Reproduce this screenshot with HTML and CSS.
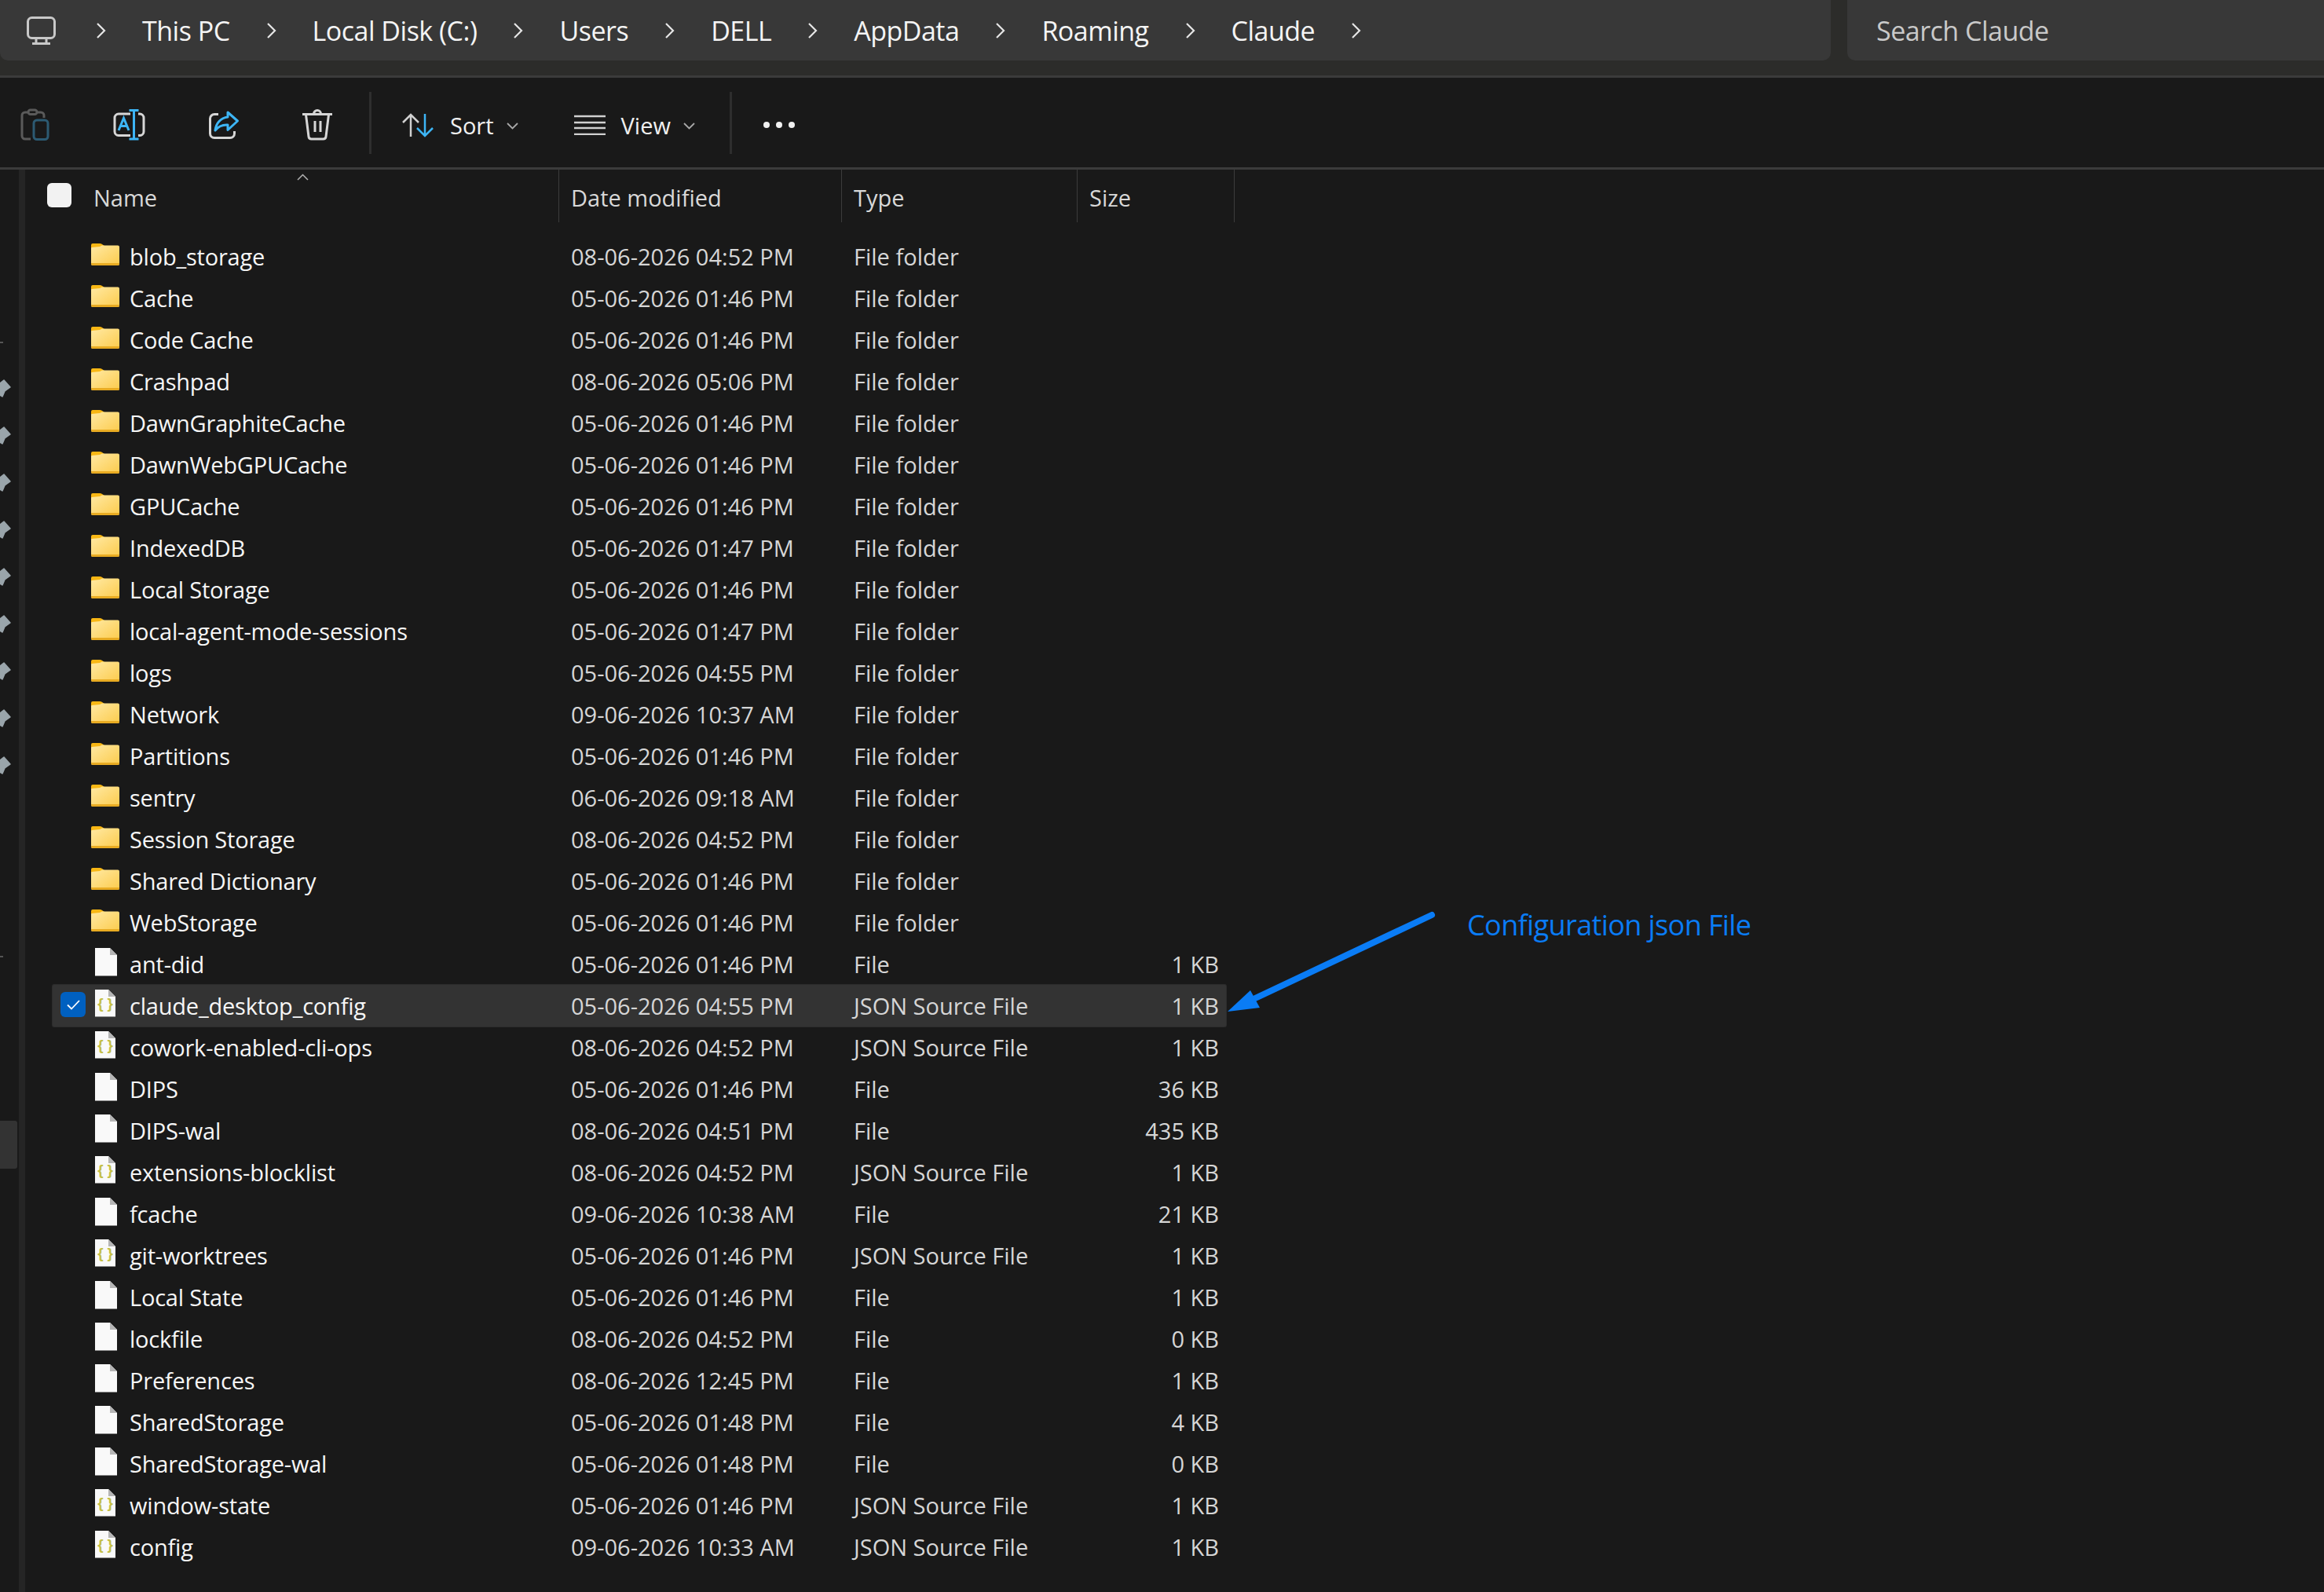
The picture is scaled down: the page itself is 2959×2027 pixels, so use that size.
FILE: index.html
```html
<!DOCTYPE html>
<html lang="en">
<head>
    <meta charset="UTF-8">
    <title>Claude - File Explorer</title>
    <link rel="stylesheet" href="styles.css">
</head>
<body>
    <!-- Shared icons -->
    <svg class="defs" width="0" height="0">
        <defs>
            <linearGradient id="folderFill" x1="0" y1="0" x2="1" y2="1">
                <stop offset="0" stop-color="#ffe9a3"/>
                <stop offset="1" stop-color="#fccb4c"/>
            </linearGradient>
            <symbol id="folder" viewBox="0 0 36 36">
                <path d="M0 6a2 2 0 0 1 2-2h9a5 5 0 0 1 3 1l3 2v4H0z" fill="#f8b714"/>
                <path d="M0 10a1 1 0 0 1 1-1l10-1 3-1.500h20a2 2 0 0 1 2 2V30a2 2 0 0 1-2 2H2a2 2 0 0 1-2-2z" fill="url(#folderFill)"/>
                <path d="M0 30a2 2 0 0 0 2 2h32a2 2 0 0 0 2-2v-1H0z" fill="#e8ab22"/>
            </symbol>
            <symbol id="file" viewBox="0 0 36 36">
                <path d="M5 0h19l9 9v27H5z" fill="#f9f9f9"/>
                <path d="M24 0l9 9h-9z" fill="#b5b5b5"/>
                <path d="M5 35h28v1H5z" fill="#8a8a8a"/>
            </symbol>
            <symbol id="json" viewBox="0 0 36 36">
                <path d="M5 0h17l9 9v26H5z" fill="#f9f9f9"/>
                <path d="M22 0l9 9h-9z" fill="#b5b5b5"/>
                <path d="M5 34h26v1H5z" fill="#8a8a8a"/>
                <text x="18" y="24" text-anchor="middle" class="brace">{ }</text>
            </symbol>
            <symbol id="pin" viewBox="0 0 14 24">
                <path d="M0 5L5 1l8 9-7 5-3 7-3-2z" fill="#9aa5ab" stroke="#9aa5ab" stroke-width="1.500" stroke-linejoin="round"/>
            </symbol>
            <symbol id="chev" viewBox="0 0 13 20">
                <path d="M2 1l9 9-9 9" fill="none" stroke="#e6e6e6" stroke-width="2.200"/>
            </symbol>
            <symbol id="caret" viewBox="0 0 15 9">
                <path d="M1 1l6.500 6.500L14 1" fill="none" stroke="#a8a8a8" stroke-width="1.800"/>
            </symbol>
        </defs>
    </svg>

    <div class="topbar">
        <div class="crumbs">
            <svg class="pc-icon" viewBox="0 0 37 36" fill="none" stroke="#c8c8c8" stroke-width="3">
                <rect x="1.500" y="1.500" width="34" height="26" rx="5"/>
                <path d="M12 27v7M25 27v7M7 34.500h23"/>
            </svg>
            <svg class="chev"><use href="#chev"/></svg>
            <span>This PC</span>
            <svg class="chev"><use href="#chev"/></svg>
            <span>Local Disk (C:)</span>
            <svg class="chev"><use href="#chev"/></svg>
            <span>Users</span>
            <svg class="chev"><use href="#chev"/></svg>
            <span>DELL</span>
            <svg class="chev"><use href="#chev"/></svg>
            <span>AppData</span>
            <svg class="chev"><use href="#chev"/></svg>
            <span>Roaming</span>
            <svg class="chev"><use href="#chev"/></svg>
            <span>Claude</span>
            <svg class="chev"><use href="#chev"/></svg>
        </div>
        <div class="search">Search Claude</div>
    </div>

    <div class="toolbar">
        <div class="tool-group">
            <svg class="tool-icon" viewBox="0 0 42 40" fill="none" stroke-width="3">
                <path d="M8 4H5a4 4 0 0 0-4 4v26a4 4 0 0 0 4 4h7M21 4h4a4 4 0 0 1 4 4v3" stroke="#5a5a5a"/>
                <rect x="9" y="1" width="11" height="5.500" rx="2.700" stroke="#5a5a5a"/>
                <rect x="16" y="14" width="18" height="24.500" rx="4" stroke="#2c5a72"/>
            </svg>
            <svg class="tool-icon" viewBox="0 0 42 40" fill="none" stroke-width="3">
                <path d="M20 33.500H5a5 5 0 0 1-5-5V11a5 5 0 0 1 5-5h15M30 6h2a5 5 0 0 1 5 5v17.500a5 5 0 0 1-5 5h-2" stroke="#d6d6d6"/>
                <path d="M24.500 1v37M18.500 1.500h12M18.500 38h12M5 27l6.500-15.500L18 27M7.500 21.500h8" stroke="#3db5f5"/>
            </svg>
            <svg class="tool-icon" viewBox="0 0 42 40" fill="none" stroke-width="3">
                <path d="M13 6.500H8a5.500 5.500 0 0 0-5.500 5.500v19A5.500 5.500 0 0 0 8 36.500h20a5.500 5.500 0 0 0 5.500-5.500v-3" stroke="#d6d6d6"/>
                <path d="M25 4l12.500 11L25 26.500V20c-7-.5-12 2-16 7 1-9 7-16 16-17z" stroke="#3db5f5" stroke-linejoin="round"/>
            </svg>
            <svg class="tool-icon" viewBox="0 0 42 40" fill="none" stroke="#d6d6d6" stroke-width="3">
                <path d="M1 6.500h38M15.500 6a4.500 4.500 0 0 1 9 0M5.500 7l3.500 28a3.500 3.500 0 0 0 3.500 3h15a3.500 3.500 0 0 0 3.500-3l3.500-28M17 15v14M24 15v14"/>
            </svg>
        </div>
        <div class="tool-sep"></div>
        <div class="tool-btn sort-btn">
            <svg class="sort-icon" viewBox="0 0 40 31" fill="none" stroke-width="2.500">
                <path d="M11 30V2M1 12L11 2l10 10" stroke="#d0d0d0"/>
                <path d="M29 1v28M19 19l10 10 10-10" stroke="#3db5f5"/>
            </svg>
            <span>Sort</span>
            <svg class="caret"><use href="#caret"/></svg>
        </div>
        <div class="tool-btn view-btn">
            <svg class="view-icon" viewBox="0 0 40 26" fill="none" stroke="#d0d0d0" stroke-width="2.500">
                <path d="M0 2h40M0 10h40M0 17h40M0 25h40"/>
            </svg>
            <span>View</span>
            <svg class="caret"><use href="#caret"/></svg>
        </div>
        <div class="tool-sep sep-last"></div>
        <div class="dots"><i></i><i></i><i></i></div>
    </div>

    <div class="main">
        <div class="sidebar">
            <div class="side-mark"></div>
            <div class="pins">
                <svg class="pin"><use href="#pin"/></svg>
                <svg class="pin"><use href="#pin"/></svg>
                <svg class="pin"><use href="#pin"/></svg>
                <svg class="pin"><use href="#pin"/></svg>
                <svg class="pin"><use href="#pin"/></svg>
                <svg class="pin"><use href="#pin"/></svg>
                <svg class="pin"><use href="#pin"/></svg>
                <svg class="pin"><use href="#pin"/></svg>
                <svg class="pin"><use href="#pin"/></svg>
            </div>
            <div class="side-mark mark-low"></div>
            <div class="side-active"></div>
        </div>

        <div class="content">
            <div class="list-head">
                <div class="head-cell head-name"><span class="head-check"></span>Name</div>
                <div class="head-cell">Date modified</div>
                <div class="head-cell">Type</div>
                <div class="head-cell">Size</div>
                <svg class="sort-caret" viewBox="0 0 15 9"><path d="M1 8l6.500-6.500L14 8" fill="none" stroke="#b0b0b0" stroke-width="1.500"/></svg>
            </div>

            <div class="rows">
                <div class="row"><div class="name"><span class="check"></span><svg class="icon"><use href="#folder"/></svg>blob_storage</div><div>08-06-2026 04:52 PM</div><div>File folder</div><div class="size"></div></div>
                <div class="row"><div class="name"><span class="check"></span><svg class="icon"><use href="#folder"/></svg>Cache</div><div>05-06-2026 01:46 PM</div><div>File folder</div><div class="size"></div></div>
                <div class="row"><div class="name"><span class="check"></span><svg class="icon"><use href="#folder"/></svg>Code Cache</div><div>05-06-2026 01:46 PM</div><div>File folder</div><div class="size"></div></div>
                <div class="row"><div class="name"><span class="check"></span><svg class="icon"><use href="#folder"/></svg>Crashpad</div><div>08-06-2026 05:06 PM</div><div>File folder</div><div class="size"></div></div>
                <div class="row"><div class="name"><span class="check"></span><svg class="icon"><use href="#folder"/></svg>DawnGraphiteCache</div><div>05-06-2026 01:46 PM</div><div>File folder</div><div class="size"></div></div>
                <div class="row"><div class="name"><span class="check"></span><svg class="icon"><use href="#folder"/></svg>DawnWebGPUCache</div><div>05-06-2026 01:46 PM</div><div>File folder</div><div class="size"></div></div>
                <div class="row"><div class="name"><span class="check"></span><svg class="icon"><use href="#folder"/></svg>GPUCache</div><div>05-06-2026 01:46 PM</div><div>File folder</div><div class="size"></div></div>
                <div class="row"><div class="name"><span class="check"></span><svg class="icon"><use href="#folder"/></svg>IndexedDB</div><div>05-06-2026 01:47 PM</div><div>File folder</div><div class="size"></div></div>
                <div class="row"><div class="name"><span class="check"></span><svg class="icon"><use href="#folder"/></svg>Local Storage</div><div>05-06-2026 01:46 PM</div><div>File folder</div><div class="size"></div></div>
                <div class="row"><div class="name"><span class="check"></span><svg class="icon"><use href="#folder"/></svg>local-agent-mode-sessions</div><div>05-06-2026 01:47 PM</div><div>File folder</div><div class="size"></div></div>
                <div class="row"><div class="name"><span class="check"></span><svg class="icon"><use href="#folder"/></svg>logs</div><div>05-06-2026 04:55 PM</div><div>File folder</div><div class="size"></div></div>
                <div class="row"><div class="name"><span class="check"></span><svg class="icon"><use href="#folder"/></svg>Network</div><div>09-06-2026 10:37 AM</div><div>File folder</div><div class="size"></div></div>
                <div class="row"><div class="name"><span class="check"></span><svg class="icon"><use href="#folder"/></svg>Partitions</div><div>05-06-2026 01:46 PM</div><div>File folder</div><div class="size"></div></div>
                <div class="row"><div class="name"><span class="check"></span><svg class="icon"><use href="#folder"/></svg>sentry</div><div>06-06-2026 09:18 AM</div><div>File folder</div><div class="size"></div></div>
                <div class="row"><div class="name"><span class="check"></span><svg class="icon"><use href="#folder"/></svg>Session Storage</div><div>08-06-2026 04:52 PM</div><div>File folder</div><div class="size"></div></div>
                <div class="row"><div class="name"><span class="check"></span><svg class="icon"><use href="#folder"/></svg>Shared Dictionary</div><div>05-06-2026 01:46 PM</div><div>File folder</div><div class="size"></div></div>
                <div class="row"><div class="name"><span class="check"></span><svg class="icon"><use href="#folder"/></svg>WebStorage</div><div>05-06-2026 01:46 PM</div><div>File folder</div><div class="size"></div></div>
                <div class="row"><div class="name"><span class="check"></span><svg class="icon"><use href="#file"/></svg>ant-did</div><div>05-06-2026 01:46 PM</div><div>File</div><div class="size">1 KB</div></div>
                <div class="row selected"><div class="name"><span class="check"><svg viewBox="0 0 32 32"><path d="M9 16.500l5 5L24 11" fill="none" stroke="#fff" stroke-width="1.800"/></svg></span><svg class="icon"><use href="#json"/></svg>claude_desktop_config</div><div>05-06-2026 04:55 PM</div><div>JSON Source File</div><div class="size">1 KB</div></div>
                <div class="row"><div class="name"><span class="check"></span><svg class="icon"><use href="#json"/></svg>cowork-enabled-cli-ops</div><div>08-06-2026 04:52 PM</div><div>JSON Source File</div><div class="size">1 KB</div></div>
                <div class="row"><div class="name"><span class="check"></span><svg class="icon"><use href="#file"/></svg>DIPS</div><div>05-06-2026 01:46 PM</div><div>File</div><div class="size">36 KB</div></div>
                <div class="row"><div class="name"><span class="check"></span><svg class="icon"><use href="#file"/></svg>DIPS-wal</div><div>08-06-2026 04:51 PM</div><div>File</div><div class="size">435 KB</div></div>
                <div class="row"><div class="name"><span class="check"></span><svg class="icon"><use href="#json"/></svg>extensions-blocklist</div><div>08-06-2026 04:52 PM</div><div>JSON Source File</div><div class="size">1 KB</div></div>
                <div class="row"><div class="name"><span class="check"></span><svg class="icon"><use href="#file"/></svg>fcache</div><div>09-06-2026 10:38 AM</div><div>File</div><div class="size">21 KB</div></div>
                <div class="row"><div class="name"><span class="check"></span><svg class="icon"><use href="#json"/></svg>git-worktrees</div><div>05-06-2026 01:46 PM</div><div>JSON Source File</div><div class="size">1 KB</div></div>
                <div class="row"><div class="name"><span class="check"></span><svg class="icon"><use href="#file"/></svg>Local State</div><div>05-06-2026 01:46 PM</div><div>File</div><div class="size">1 KB</div></div>
                <div class="row"><div class="name"><span class="check"></span><svg class="icon"><use href="#file"/></svg>lockfile</div><div>08-06-2026 04:52 PM</div><div>File</div><div class="size">0 KB</div></div>
                <div class="row"><div class="name"><span class="check"></span><svg class="icon"><use href="#file"/></svg>Preferences</div><div>08-06-2026 12:45 PM</div><div>File</div><div class="size">1 KB</div></div>
                <div class="row"><div class="name"><span class="check"></span><svg class="icon"><use href="#file"/></svg>SharedStorage</div><div>05-06-2026 01:48 PM</div><div>File</div><div class="size">4 KB</div></div>
                <div class="row"><div class="name"><span class="check"></span><svg class="icon"><use href="#file"/></svg>SharedStorage-wal</div><div>05-06-2026 01:48 PM</div><div>File</div><div class="size">0 KB</div></div>
                <div class="row"><div class="name"><span class="check"></span><svg class="icon"><use href="#json"/></svg>window-state</div><div>05-06-2026 01:46 PM</div><div>JSON Source File</div><div class="size">1 KB</div></div>
                <div class="row"><div class="name"><span class="check"></span><svg class="icon"><use href="#json"/></svg>config</div><div>09-06-2026 10:33 AM</div><div>JSON Source File</div><div class="size">1 KB</div></div>
            </div>
        </div>
    </div>

    <!-- Annotation drawn over the screenshot -->
    <svg class="callout-arrow" viewBox="0 0 290 150">
        <path d="M273 15L46 122" fill="none" stroke="#0a7cf5" stroke-width="8" stroke-linecap="round"/>
        <path d="M13 138l29-27 12 22z" fill="#0a7cf5"/>
    </svg>
    <div class="callout-text">Configuration json File</div>
</body>
</html>
```

FILE: styles.css
```css
/* Base */
body {
    margin: 0;
    height: 100vh;
    overflow: hidden;
    position: relative;
    background: #191919;
    color: #e4e4e4;
    font-family: "Open Sans", "Noto Sans", sans-serif;
    font-size: 29px;
}

.defs {
    position: absolute;
}

.brace {
    font-family: "Liberation Sans", sans-serif;
    font-size: 19px;
    font-weight: 700;
    fill: #c4bf47;
}

/* Address bar */
.topbar {
    display: flex;
    gap: 21px;
    height: 96px;
    background: #2c2c2a;
    border-bottom: 3px solid #3b3b3b;
}

.crumbs {
    width: 2331px;
    height: 77px;
    box-sizing: border-box;
    padding-left: 34px;
    display: flex;
    align-items: center;
    gap: 46px;
    background: #383838;
    border-radius: 0 0 10px 10px;
    color: #f4f4f4;
    font-size: 34px;
    letter-spacing: -0.5px;
}

.pc-icon {
    width: 37px;
    height: 36px;
    margin-right: 5px;
}

.chev {
    width: 13px;
    height: 20px;
}

.search {
    flex: 1;
    height: 77px;
    box-sizing: border-box;
    padding-left: 37px;
    display: flex;
    align-items: center;
    background: #383838;
    border-radius: 0 0 0 10px;
    color: #c9c9c9;
    font-size: 34px;
    letter-spacing: -0.5px;
}

/* Command bar */
.toolbar {
    display: flex;
    align-items: center;
    height: 108px;
    padding: 6px 0 0 27px;
    border-bottom: 3px solid #3b3b3b;
    color: #f0f0f0;
}

.tool-group {
    display: flex;
    gap: 77px;
}

.tool-icon {
    width: 42px;
    height: 40px;
    overflow: visible;
}

.tool-sep {
    width: 3px;
    height: 79px;
    margin-left: 44px;
    margin-top: -6px;
    background: #2e2e2e;
}

.tool-btn {
    display: flex;
    align-items: center;
}

.sort-btn {
    margin-left: 39px;
}

.sort-icon {
    width: 40px;
    height: 31px;
    margin-right: 21px;
}

.view-btn {
    margin-left: 71px;
}

.view-icon {
    width: 40px;
    height: 26px;
    margin-right: 20px;
}

.caret {
    width: 15px;
    height: 9px;
    margin-left: 16px;
    margin-top: 2px;
}

.sep-last {
    margin-left: 44px;
}

.dots {
    display: flex;
    gap: 8px;
    margin-left: 40px;
}

.dots i {
    width: 8px;
    height: 8px;
    border-radius: 50%;
    background: #f0f0f0;
}

/* Navigation pane, only its edge is in view */
.main {
    display: flex;
    height: calc(100vh - 216px);
}

.sidebar {
    width: 32px;
    flex: none;
    box-sizing: border-box;
    padding-top: 219px;
    border-right: 8px solid #252525;
    display: flex;
    flex-direction: column;
}

.side-mark {
    width: 4px;
    height: 2px;
    background: #555;
}

.pins {
    display: flex;
    flex-direction: column;
    gap: 36px;
    margin-top: 46px;
}

.pin {
    width: 14px;
    height: 24px;
}

.mark-low {
    margin-top: 230px;
}

.side-active {
    width: 22px;
    height: 61px;
    margin-top: 208px;
    background: #333;
    border-radius: 0 3px 3px 0;
}

/* Details list */
.content {
    flex: 1;
    min-width: 0;
}

.list-head {
    position: relative;
    display: grid;
    grid-template-columns: 652px 360px 300px 200px;
    width: 1512px;
    height: 67px;
    margin-left: 28px;
    color: #d8d8d8;
}

.head-cell {
    display: flex;
    align-items: center;
    padding: 3px 0 0 15px;
    border-right: 1px solid #3c3c3c;
}

.head-name {
    padding-left: 0;
    gap: 28px;
}

.head-check {
    width: 31px;
    height: 31px;
    margin-top: -5px;
    border-radius: 6px;
    background: #f2f2f2;
}

.sort-caret {
    position: absolute;
    left: 318px;
    top: 5px;
    width: 15px;
    height: 9px;
}

.rows {
    padding-top: 17px;
    margin-left: 35px;
}

.row {
    display: grid;
    grid-template-columns: 660px 360px 360px 114px;
    align-items: center;
    width: 1494px;
    height: 53px;
    color: #d6d6d6;
}

.name {
    display: flex;
    align-items: center;
    padding-left: 10px;
    color: #f6f6f6;
    letter-spacing: -0.2px;
}

.check {
    width: 32px;
    height: 32px;
    margin-right: 7px;
    border-radius: 6px;
    margin-top: -3px;
}

.check svg {
    display: block;
}

.icon {
    width: 36px;
    height: 36px;
    margin: -6px 13px 0 0;
    flex: none;
}

.size {
    padding-right: 9px;
    text-align: right;
}

.selected {
    background: #333;
    box-shadow: 0 0 0 1px #2c2c2c;
    border-radius: 2px;
}

.selected .check {
    background: #0060c0;
}

/* Annotation */
.callout-arrow {
    position: absolute;
    left: 1550px;
    top: 1150px;
    width: 290px;
    height: 150px;
}

.callout-text {
    position: absolute;
    left: 1868px;
    top: 1153px;
    color: #0a7cf5;
    font-size: 36px;
    letter-spacing: -0.6px;
}
```
